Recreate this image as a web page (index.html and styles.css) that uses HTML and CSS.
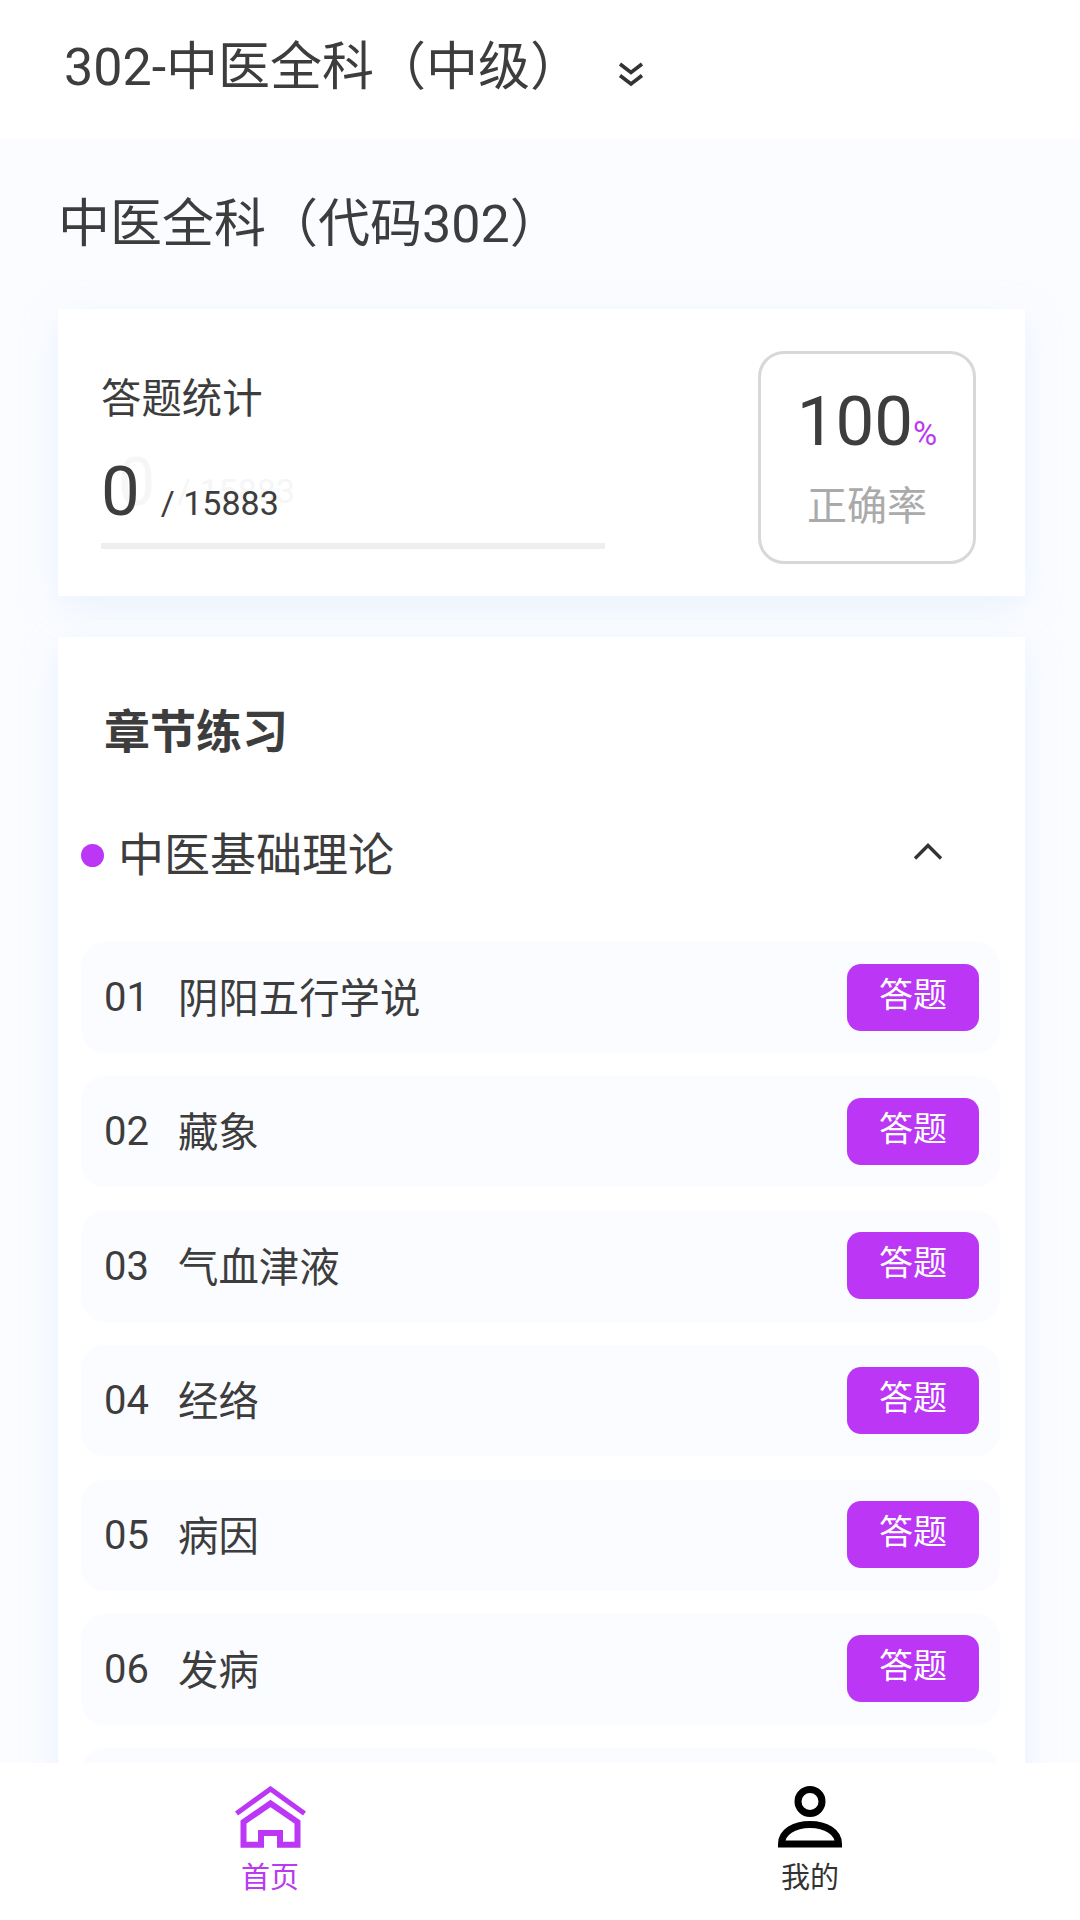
FILE: index.html
```html
<!DOCTYPE html>
<html lang="zh-CN">
<head>
    <meta charset="UTF-8">
    <meta name="viewport" content="width=device-width, initial-scale=1.0">
    <title>章节练习</title>
    <link rel="stylesheet" href="styles.css">
</head>
<body>

    <div class="cabecera">
        <span class="cabecera-titulo">302-中医全科（中级）</span>
        <svg class="icono-doble" viewBox="0 0 26 25" width="26" height="25">
            <polyline points="2,2 13,10.5 24,2"></polyline>
            <polyline points="2,13.5 13,22 24,13.5"></polyline>
        </svg>
    </div>

    <div class="contenido">
        <div class="subtitulo">中医全科（代码302）</div>

        <div class="tarjeta estadistica">
            <div class="resumen">
                <div class="resumen-titulo">答题统计</div>
                <div class="conteo">
                    <span class="conteo-actual">0</span>
                    <span class="conteo-total">/ 15883</span>
                    <span class="fantasma fantasma-actual">0</span>
                    <span class="fantasma fantasma-total">/ 15883</span>
                </div>
                <div class="barra"></div>
            </div>
            <div class="tasa">
                <div class="tasa-valor">100<span class="tasa-signo">%</span></div>
                <div class="tasa-texto">正确率</div>
            </div>
        </div>

        <div class="tarjeta capitulos">
            <div class="capitulos-titulo">章节练习</div>
            <div class="grupo">
                <span class="punto"></span>
                <span class="grupo-nombre">中医基础理论</span>
                <svg class="icono-arriba" viewBox="0 0 30 17" width="30" height="17">
                    <polyline points="2,15.5 15,2.5 28,15.5"></polyline>
                </svg>
            </div>
            <div class="lista">
                <div class="fila"><span class="numero">01</span><span class="nombre">阴阳五行学说</span><span class="boton">答题</span></div>
                <div class="fila"><span class="numero">02</span><span class="nombre">藏象</span><span class="boton">答题</span></div>
                <div class="fila"><span class="numero">03</span><span class="nombre">气血津液</span><span class="boton">答题</span></div>
                <div class="fila"><span class="numero">04</span><span class="nombre">经络</span><span class="boton">答题</span></div>
                <div class="fila"><span class="numero">05</span><span class="nombre">病因</span><span class="boton">答题</span></div>
                <div class="fila"><span class="numero">06</span><span class="nombre">发病</span><span class="boton">答题</span></div>
                <div class="fila"><span class="numero">07</span><span class="nombre"></span><span class="boton">答题</span></div>
            </div>
        </div>
    </div>

    <div class="pestanas">
        <div class="pestana activa">
            <svg class="icono-tab" viewBox="0 0 71 62" width="71" height="62">
                <polyline points="1.5,27.5 35.5,3 69.5,27.5" stroke-width="5"></polyline>
                <path d="M8.5 58.8 V36 L35.5 17.5 L62.5 36 V58.8 H45 V47 H26 V58.8 Z" stroke-width="6"></path>
            </svg>
            <span>首页</span>
        </div>
        <div class="pestana">
            <svg class="icono-tab" viewBox="0 0 64 62" width="64" height="62">
                <circle cx="32" cy="15.5" r="12" stroke-width="7"></circle>
                <path d="M3.5 58 C3.5 46 16 38.5 32 38.5 C48 38.5 60.5 46 60.5 58 Z" stroke-width="7"></path>
            </svg>
            <span>我的</span>
        </div>
    </div>

</body>
</html>
```

FILE: styles.css
```css
body {
    font-family: Roboto, "Noto Sans CJK SC", sans-serif;
    color: #3d3d3d;
    margin: 0;
    width: 1080px;
    height: 1920px;
    overflow: hidden;
    display: flex;
    flex-direction: column;
    background: #fbfcff;
}

.cabecera {
    height: 138px;
    flex-shrink: 0;
    background: #fff;
    display: flex;
    align-items: center;
    padding-left: 64px;
}

.cabecera-titulo {
    font-size: 52px;
    line-height: 60px;
    margin-bottom: 2px;
}

.icono-doble {
    position: relative;
    left: 36px;
    top: 5px;
    fill: none;
    stroke: #333;
    stroke-width: 3.6;
}

.contenido {
    flex: 1;
    min-height: 0;
    overflow: hidden;
}

.subtitulo {
    height: 171px;
    padding-left: 58px;
    font-size: 52px;
    line-height: 60px;
    padding-top: 57px;
    box-sizing: border-box;
}

.tarjeta {
    background: #fff;
    margin: 0 55px 0 58px;
    box-shadow: 0 10px 34px rgba(185, 215, 250, 0.26);
}

.estadistica {
    height: 287px;
    box-sizing: border-box;
    padding: 42px 49px 0 43px;
    display: flex;
    justify-content: space-between;
    align-items: flex-start;
}

.resumen {
    width: 504px;
    padding-top: 25px;
}

.resumen-titulo {
    font-size: 40.4px;
    line-height: 48px;
}

.conteo {
    position: relative;
    display: flex;
    align-items: baseline;
    margin-top: 31px;
    height: 74px;
}

.conteo-actual {
    font-size: 69px;
    line-height: 74px;
}

.conteo-total {
    font-size: 34px;
    margin-left: 21px;
}

.fantasma {
    position: absolute;
    color: #f6f6f6;
    z-index: 0;
}

.fantasma-actual {
    font-size: 66px;
    left: 17px;
    top: -11px;
}

.fantasma-total {
    font-size: 34px;
    left: 76px;
    top: 16px;
}

.conteo-actual,
.conteo-total {
    position: relative;
    z-index: 1;
}

.barra {
    height: 6px;
    background: #eee;
    margin-top: 14px;
}

.tasa {
    width: 218px;
    height: 213px;
    box-sizing: border-box;
    border: 3px solid #d8d8d8;
    border-radius: 26px;
    text-align: center;
    padding-top: 28px;
}

.tasa-valor {
    font-size: 69px;
    line-height: 80px;
}

.tasa-signo {
    font-size: 33px;
    color: #bb3af0;
}

.tasa-texto {
    font-size: 40px;
    line-height: 48px;
    color: #aaa;
    margin-top: 9px;
}

.capitulos {
    margin-top: 41px;
    padding: 65px 25px 40px 23px;
    min-height: 1200px;
}

.capitulos-titulo {
    font-size: 46px;
    line-height: 60px;
    font-weight: 700;
    padding-left: 23px;
}

.grupo {
    display: flex;
    align-items: center;
    height: 60px;
    margin-top: 63px;
}

.punto {
    width: 23px;
    height: 23px;
    border-radius: 50%;
    background: #bb36f5;
    flex-shrink: 0;
}

.grupo-nombre {
    font-size: 46px;
    line-height: 60px;
    margin-left: 14px;
    flex: 1;
}

.icono-arriba {
    fill: none;
    stroke: #333;
    stroke-width: 3.4;
    margin-right: 57px;
    margin-top: -8px;
}

.lista {
    margin-top: 57px;
    display: flex;
    flex-direction: column;
    gap: 23.4px;
}

.fila {
    height: 111px;
    background: #fbfcff;
    border-radius: 24px;
    display: flex;
    align-items: center;
    padding: 0 21px 0 23px;
}

.numero {
    font-size: 40px;
    width: 74px;
    flex-shrink: 0;
}

.nombre {
    font-size: 40.4px;
    line-height: 48px;
    flex: 1;
    margin-top: 5px;
}

.boton {
    width: 132px;
    height: 67px;
    line-height: 63px;
    margin-top: -1px;
    background: #bb36f5;
    border-radius: 14px;
    color: #fff;
    font-size: 34px;
    text-align: center;
}

.pestanas {
    height: 157px;
    flex-shrink: 0;
    background: #fff;
    display: flex;
}

.pestana {
    flex: 1;
    display: flex;
    flex-direction: column;
    align-items: center;
    padding-top: 23px;
    font-size: 29px;
    line-height: 34px;
    color: #333;
}

.pestana span {
    margin-top: 13px;
}

.icono-tab {
    fill: none;
    stroke: #000;
    display: block;
}

.pestana.activa {
    color: #bb3af0;
}

.pestana.activa .icono-tab {
    stroke: #bb36f5;
}
```
